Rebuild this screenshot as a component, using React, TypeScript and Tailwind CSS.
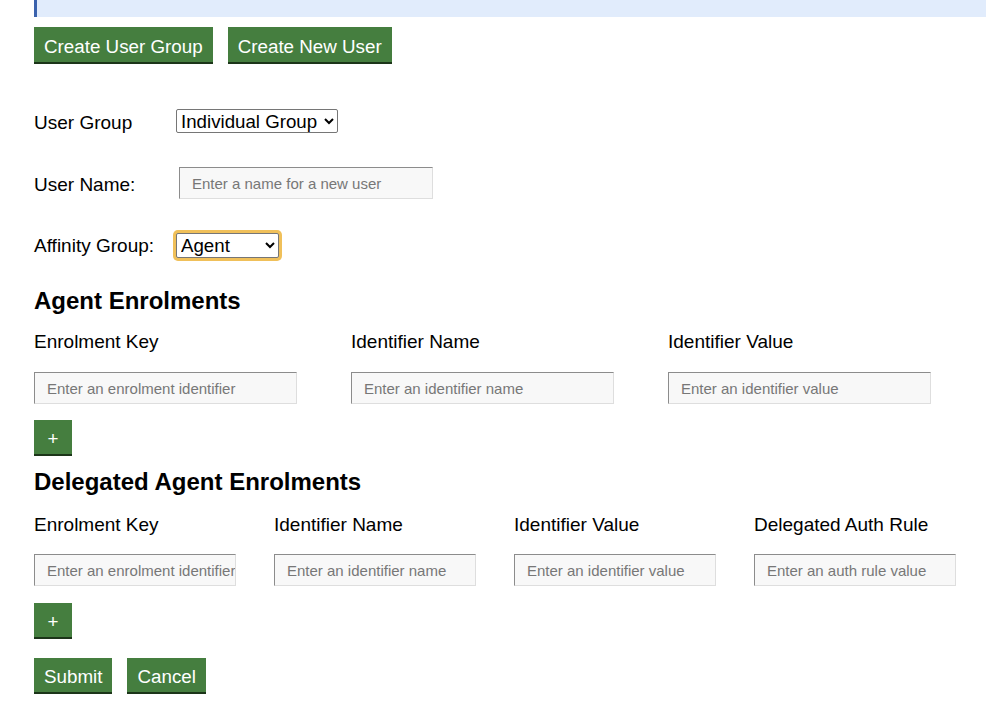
import { useState } from 'react';

const font = { fontFamily: '"Liberation Sans", Arial, sans-serif' };

function GreenButton({ children, wide, square }: { children: React.ReactNode; wide?: boolean; square?: boolean }) {
  return (
    <button
      type="button"
      className={
        'inline-flex items-center justify-center bg-[#457e3f] text-white text-[18.8px] leading-none pt-[5px] border-b-2 border-[#1c3519] ' +
        (wide ? 'h-[37px] px-[10px]' : square ? 'h-[36px] w-[38px]' : 'h-[36px] px-[10px]')
      }
    >
      {children}
    </button>
  );
}

function TextBox({ placeholder, width }: { placeholder: string; width: string }) {
  return (
    <input
      type="text"
      placeholder={placeholder}
      className={
        width +
        ' h-[32px] bg-[#f8f8f8] pl-[12px] text-[15px] border border-t-[#8c8c8c] border-l-[#8c8c8c] border-b-[#dedede] border-r-[#dedede] placeholder:text-[#777] outline-none'
      }
    />
  );
}

export default function App() {
  const [group, setGroup] = useState('individual');
  const [affinity, setAffinity] = useState('agent');

  const agentCols = [
    { label: 'Enrolment Key', ph: 'Enter an enrolment identifier' },
    { label: 'Identifier Name', ph: 'Enter an identifier name' },
    { label: 'Identifier Value', ph: 'Enter an identifier value' },
  ];

  const delegatedCols = [
    { label: 'Enrolment Key', ph: 'Enter an enrolment identifier' },
    { label: 'Identifier Name', ph: 'Enter an identifier name' },
    { label: 'Identifier Value', ph: 'Enter an identifier value' },
    { label: 'Delegated Auth Rule', ph: 'Enter an auth rule value' },
  ];

  return (
    <div className="w-[986px] h-[718px] overflow-hidden bg-white text-black pl-[34px]" style={font}>
      {/* notice banner */}
      <div className="h-[17px] bg-[#e1ecfc] border-l-[3px] border-[#3a62ad]" />

      {/* top actions */}
      <div className="flex gap-[15px] mt-[10px]">
        <GreenButton wide>Create User Group</GreenButton>
        <GreenButton wide>Create New User</GreenButton>
      </div>

      {/* user group */}
      <div className="flex items-start mt-[45px] h-[24px]">
        <label className="w-[142px] mt-[3px] text-[19px] leading-[22px]">User Group</label>
        <select
          value={group}
          onChange={(e) => setGroup(e.target.value)}
          className="h-[24px] text-[18.7px] bg-white border border-[#767676] rounded-[2px] pl-0 pr-[3px]"
        >
          <option value="individual">Individual Group</option>
          <option value="admin">Admin Group</option>
        </select>
      </div>

      {/* user name */}
      <div className="flex items-start mt-[34px]">
        <label className="w-[145px] mt-[7px] text-[19px] leading-[22px]">User Name:</label>
        <TextBox placeholder="Enter a name for a new user" width="w-[254px]" />
      </div>

      {/* affinity group */}
      <div className="flex items-start mt-[34px]">
        <label className="w-[142px] mt-[2px] text-[19px] leading-[22px]">Affinity Group:</label>
        <select
          value={affinity}
          onChange={(e) => setAffinity(e.target.value)}
          className="w-[103px] h-[25px] text-[18.7px] bg-white border border-[#767676] rounded-[2px] pl-0 ring-[3px] ring-[#f0c05a] outline-none"
        >
          <option value="agent">Agent</option>
          <option value="delegate">Delegate</option>
        </select>
      </div>

      {/* agent enrolments */}
      <h2 className="mt-[29px] text-[24px] leading-[28px] font-bold">Agent Enrolments</h2>
      <div className="flex gap-[54px] mt-[16px]">
        {agentCols.map((c) => (
          <div key={c.label} className="w-[263px] flex flex-col">
            <span className="text-[19px] leading-[22px]">{c.label}</span>
            <div className="mt-[19px]">
              <TextBox placeholder={c.ph} width="w-[263px]" />
            </div>
          </div>
        ))}
      </div>
      <div className="mt-[16px]">
        <GreenButton square>+</GreenButton>
      </div>

      {/* delegated agent enrolments */}
      <h2 className="mt-[12px] text-[24px] leading-[28px] font-bold">Delegated Agent Enrolments</h2>
      <div className="flex gap-[38px] mt-[18px]">
        {delegatedCols.map((c) => (
          <div key={c.label} className="w-[202px] flex flex-col">
            <span className="text-[19px] leading-[22px] whitespace-nowrap">{c.label}</span>
            <div className="mt-[18px]">
              <TextBox placeholder={c.ph} width="w-[202px]" />
            </div>
          </div>
        ))}
      </div>
      <div className="mt-[17px]">
        <GreenButton square>+</GreenButton>
      </div>

      {/* form actions */}
      <div className="flex gap-[15px] mt-[19px]">
        <GreenButton>Submit</GreenButton>
        <GreenButton>Cancel</GreenButton>
      </div>
    </div>
  );
}
